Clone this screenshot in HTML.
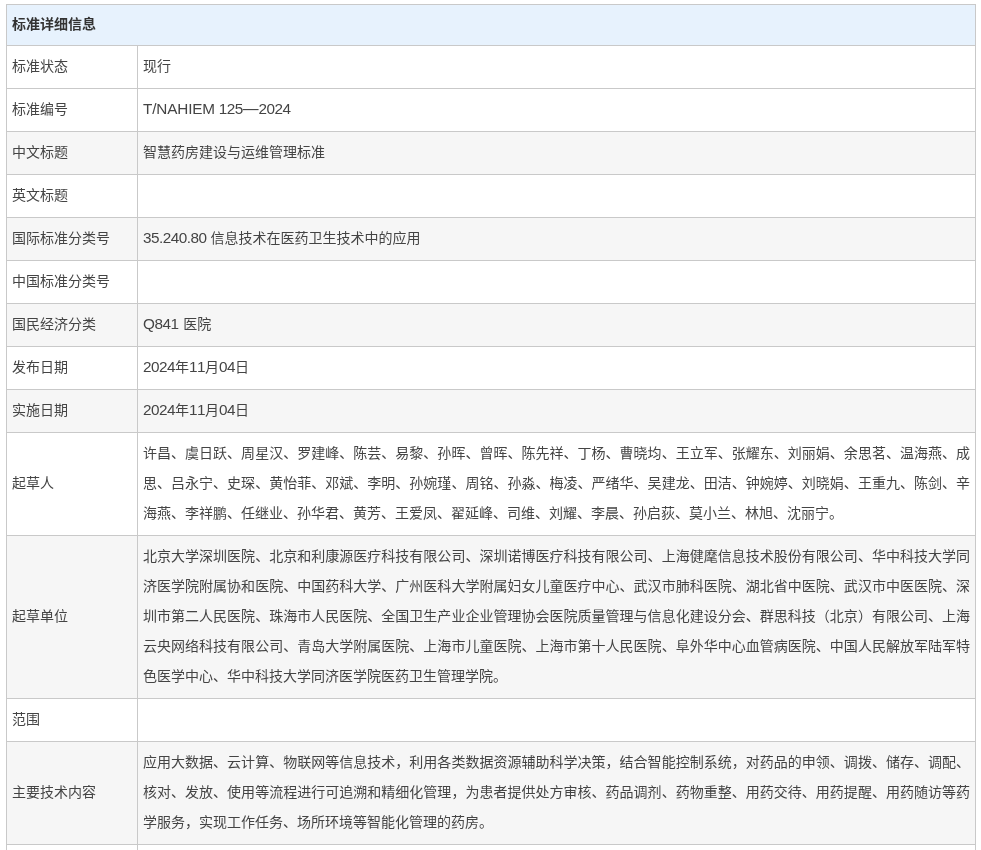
<!DOCTYPE html>
<html lang="zh-CN">
<head>
<meta charset="utf-8">
<title>标准详细信息</title>
<style>
html,body{margin:0;padding:0;background:#fff;}
body{width:981px;height:850px;overflow:hidden;font-family:"Liberation Sans","Noto Sans CJK SC",sans-serif;font-size:14px;color:#444;}
table{will-change:transform;position:absolute;left:6px;top:4px;width:970px;border-collapse:collapse;table-layout:fixed;}
td,th{border:1px solid #c9c9c9;padding:5px 5px 7px 5px;line-height:30px;text-align:left;vertical-align:middle;font-weight:normal;}
th{background:#e7f2fd;font-weight:bold;color:#333;line-height:28px;padding:5px 5px 7px 5px;}
td.l{width:118px;}
tr.g td{background:#f6f6f6;}
td.v{text-align:justify;}
.e{font-size:15.3px;line-height:1;letter-spacing:-0.507px;font-kerning:none;}
.d{font-size:15.8px;line-height:1;margin:0 -0.1px;}
.c{font-size:15.3px;line-height:1;letter-spacing:-0.15px;}
</style>
</head>
<body>
<table>
<colgroup><col style="width:131px"><col></colgroup>
<tr><th colspan="2">标准详细信息</th></tr>
<tr><td class="l">标准状态</td><td>现行</td></tr>
<tr><td class="l">标准编号</td><td><span class="c">T/NAHIEM</span> <span class="e">125</span><span class="d">—</span><span class="e">2024</span></td></tr>
<tr class="g"><td class="l">中文标题</td><td>智慧药房建设与运维管理标准</td></tr>
<tr><td class="l">英文标题</td><td></td></tr>
<tr class="g"><td class="l">国际标准分类号</td><td><span class="e">35.240.80</span> 信息技术在医药卫生技术中的应用</td></tr>
<tr><td class="l">中国标准分类号</td><td></td></tr>
<tr class="g"><td class="l">国民经济分类</td><td><span class="e" style="margin-right:1px">Q841</span> 医院</td></tr>
<tr><td class="l">发布日期</td><td><span class="e">2024</span>年<span class="e">11</span>月<span class="e">04</span>日</td></tr>
<tr class="g"><td class="l">实施日期</td><td><span class="e">2024</span>年<span class="e">11</span>月<span class="e">04</span>日</td></tr>
<tr><td class="l">起草人</td><td class="v">许昌、虞日跃、周星汉、罗建峰、陈芸、易黎、孙晖、曾晖、陈先祥、丁杨、曹晓均、王立军、张耀东、刘丽娟、余思茗、温海燕、成思、吕永宁、史琛、黄怡菲、邓斌、李明、孙婉瑾、周铭、孙淼、梅凌、严绪华、吴建龙、田洁、钟婉婷、刘晓娟、王重九、陈剑、辛海燕、李祥鹏、任继业、孙华君、黄芳、王爱凤、翟延峰、司维、刘耀、李晨、孙启荻、莫小兰、林旭、沈丽宁。</td></tr>
<tr class="g"><td class="l">起草单位</td><td class="v">北京大学深圳医院、北京和利康源医疗科技有限公司、深圳诺博医疗科技有限公司、上海健麾信息技术股份有限公司、华中科技大学同济医学院附属协和医院、中国药科大学、广州医科大学附属妇女儿童医疗中心、武汉市肺科医院、湖北省中医院、武汉市中医医院、深圳市第二人民医院、珠海市人民医院、全国卫生产业企业管理协会医院质量管理与信息化建设分会、群思科技（北京）有限公司、上海云央网络科技有限公司、青岛大学附属医院、上海市儿童医院、上海市第十人民医院、阜外华中心血管病医院、中国人民解放军陆军特色医学中心、华中科技大学同济医学院医药卫生管理学院。</td></tr>
<tr><td class="l">范围</td><td></td></tr>
<tr class="g"><td class="l">主要技术内容</td><td class="v">应用大数据、云计算、物联网等信息技术，利用各类数据资源辅助科学决策，结合智能控制系统，对药品的申领、调拨、储存、调配、核对、发放、使用等流程进行可追溯和精细化管理，为患者提供处方审核、药品调剂、药物重整、用药交待、用药提醒、用药随访等药学服务，实现工作任务、场所环境等智能化管理的药房。</td></tr>
<tr><td class="l">&nbsp;</td><td></td></tr>
</table>
</body>
</html>
